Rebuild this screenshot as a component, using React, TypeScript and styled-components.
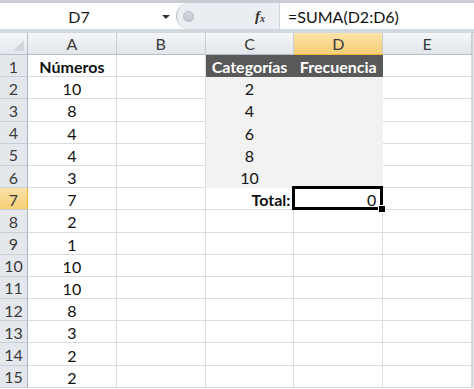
import React from 'react';
import styled, { createGlobalStyle, css } from 'styled-components';

const columns = ['A', 'B', 'C', 'D', 'E'];

type CellKind = 'plain' | 'bold' | 'dark' | 'shaded' | 'label' | 'active';

interface CellData {
  text?: string;
  kind?: CellKind;
}

const numbers = ['10', '8', '4', '4', '3', '7', '2', '1', '10', '10', '8', '3', '2', '2'];
const categories = ['2', '4', '6', '8', '10'];

function buildRows(): CellData[][] {
  const rows: CellData[][] = [];
  rows.push([
    { text: 'Números', kind: 'bold' },
    {},
    { text: 'Categorías', kind: 'dark' },
    { text: 'Frecuencia', kind: 'dark' },
    {},
  ]);
  numbers.forEach((n, i) => {
    const row: CellData[] = [{ text: n }, {}, {}, {}, {}];
    if (i < categories.length) {
      row[2] = { text: categories[i], kind: 'shaded' };
      row[3] = { kind: 'shaded' };
    }
    if (i === 5) {
      row[2] = { text: 'Total:', kind: 'label' };
      row[3] = { text: '0', kind: 'active' };
    }
    rows.push(row);
  });
  return rows;
}

const ACTIVE_COL = 'D';
const ACTIVE_ROW = 7;

function App() {
  const rows = buildRows();

  return (
    <>
      <GlobalStyle />
      <Window>
        <FormulaBar>
          <NameBox>
            <NameText>D7</NameText>
            <DropArrow />
          </NameBox>
          <FxArea>
            <Splitter>
              <Knob />
            </Splitter>
            <FxLabel>
              f<sub>x</sub>
            </FxLabel>
          </FxArea>
          <FormulaInput>=SUMA(D2:D6)</FormulaInput>
        </FormulaBar>

        <Sheet>
          <Corner>
            <CornerTriangle />
          </Corner>
          {columns.map((c) => (
            <ColHeader key={c} selected={c === ACTIVE_COL}>
              {c}
            </ColHeader>
          ))}
          <Gutter />

          {rows.map((row, r) => (
            <React.Fragment key={r}>
              <RowHeader selected={r + 1 === ACTIVE_ROW}>{r + 1}</RowHeader>
              {row.map((cell, c) => (
                <Cell key={c} kind={cell.kind ?? 'plain'}>
                  {cell.text}
                  {cell.kind === 'active' ? <FillHandle /> : null}
                </Cell>
              ))}
              <Gutter />
            </React.Fragment>
          ))}
        </Sheet>
      </Window>
    </>
  );
}

const GlobalStyle = createGlobalStyle`
  html, body {
    margin: 0;
    padding: 0;
    background: #ffffff;
  }
  body {
    font-family: Lato, 'Open Sans', sans-serif;
    -webkit-font-smoothing: antialiased;
  }
`;

const Window = styled.div`
  width: 474px;
  height: 389px;
  overflow: hidden;
  background: #ffffff;
`;

const FormulaBar = styled.div`
  display: flex;
  height: 26px;
  border-top: 3px solid #c9cdd3;
  border-bottom: 4px solid #d3d8de;
  background: #ffffff;
`;

const NameBox = styled.div`
  width: 176px;
  display: flex;
  align-items: center;
  background: #ffffff;
`;

const NameText = styled.span`
  width: 158px;
  text-align: center;
  font-size: 16px;
  color: #1b1b1b;
`;

const DropArrow = styled.span`
  width: 0;
  height: 0;
  border-left: 4px solid transparent;
  border-right: 4px solid transparent;
  border-top: 4px solid #333;
  margin-left: 4px;
  margin-top: 2px;
`;

const FxArea = styled.div`
  width: 103px;
  display: flex;
  align-items: center;
  justify-content: space-between;
  background: #eaedf1;
  border-radius: 13px 0 0 13px;
  border-left: 1px solid #b9bfc7;
  padding-right: 14px;
  box-sizing: border-box;
`;

const Splitter = styled.div`
  width: 22px;
  height: 22px;
  display: flex;
  align-items: center;
  justify-content: center;
`;

const Knob = styled.div`
  width: 11px;
  height: 11px;
  border-radius: 50%;
  background: linear-gradient(#d5d9de, #c3c8cf);
  border: 1px solid #b4bac2;
  box-sizing: border-box;
`;

const FxLabel = styled.span`
  font-family: 'Liberation Serif', serif;
  font-style: italic;
  font-weight: bold;
  font-size: 15px;
  color: #333;

  sub {
    font-size: 10px;
    vertical-align: -1px;
  }
`;

const FormulaInput = styled.div`
  flex: 1;
  display: flex;
  align-items: center;
  padding-left: 8px;
  font-size: 16px;
  color: #111;
  border-left: 1px solid #d0d5db;
`;

const Sheet = styled.div`
  display: grid;
  grid-template-columns: 28px repeat(5, 88.8px) 1fr;
  grid-template-rows: 22px repeat(15, 22.2px);
`;

const headerBase = css`
  display: flex;
  align-items: center;
  justify-content: center;
  font-size: 16px;
  color: #3a3a3a;
  box-sizing: border-box;
`;

const Corner = styled.div`
  position: relative;
  background: linear-gradient(#f4f6f8, #e3e7ec);
  border-right: 1px solid #b6bec8;
  border-bottom: 1px solid #b6bec8;
`;

const CornerTriangle = styled.span`
  position: absolute;
  right: 3px;
  bottom: 3px;
  width: 0;
  height: 0;
  border-left: 11px solid transparent;
  border-bottom: 11px solid #d2d7de;
`;

const ColHeader = styled.div<{ selected: boolean }>`
  ${headerBase};
  background: ${(p) =>
    p.selected
      ? 'linear-gradient(#fbe2a8, #f5cf76)'
      : 'linear-gradient(#f4f6f8, #e2e6eb)'};
  border-right: 1px solid #c8ced6;
  border-bottom: 1px solid ${(p) => (p.selected ? '#f2b33d' : '#b6bec8')};
`;

const RowHeader = styled.div<{ selected: boolean }>`
  ${headerBase};
  background: ${(p) =>
    p.selected ? 'linear-gradient(#fbe2a8, #f5cf76)' : '#e4e8ed'};
  border-right: 1px solid ${(p) => (p.selected ? '#f2b33d' : '#a9b3bf')};
  border-bottom: 1px solid #c8ced6;
  padding-top: 1px;
`;

const Gutter = styled.div`
  background: #e9ebee;
  border-left: 1px solid #cfd3d8;
`;

const cellKinds: Record<CellKind, ReturnType<typeof css>> = {
  plain: css``,
  bold: css`
    font-weight: bold;
  `,
  dark: css`
    background: #595959;
    color: #ffffff;
    font-weight: bold;
    border-color: #595959;
  `,
  shaded: css`
    background: #f2f2f2;
    border-color: #f2f2f2;
  `,
  label: css`
    font-weight: bold;
    justify-content: flex-end;
    padding-right: 3px;
  `,
  active: css`
    justify-content: flex-end;
    padding-right: 6px;
    position: relative;
    &::before {
      content: '';
      position: absolute;
      inset: -2px -1px -1px -2px;
      border: 3px solid #000;
      pointer-events: none;
    }
  `,
};

const Cell = styled.div<{ kind: CellKind }>`
  display: flex;
  align-items: center;
  justify-content: center;
  padding-top: 2px;
  box-sizing: border-box;
  font-size: 16px;
  color: #111;
  border-right: 1px solid #dadcdd;
  border-bottom: 1px solid #dadcdd;
  white-space: nowrap;
  ${(p) => cellKinds[p.kind]};
`;

const FillHandle = styled.span`
  position: absolute;
  right: -4px;
  bottom: -4px;
  width: 6px;
  height: 6px;
  background: #000;
  border: 1px solid #fff;
  z-index: 1;
`;

export default App;
